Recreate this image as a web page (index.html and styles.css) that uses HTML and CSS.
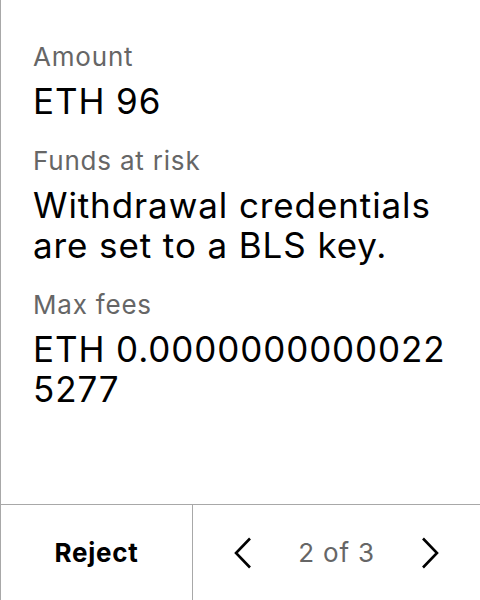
FILE: index.html
```html
<!DOCTYPE html>
<html>
<head>
<meta charset="utf-8">
<link rel="stylesheet" href="styles.css">
</head>
<body>
<div class="screen">
  <div class="content">
    <div class="field">
      <div class="label">Amount</div>
      <div class="value">ETH 96</div>
    </div>
    <div class="field">
      <div class="label">Funds at risk</div>
      <div class="value">Withdrawal credentials are set to a BLS key.</div>
    </div>
    <div class="field">
      <div class="label">Max fees</div>
      <div class="value break">ETH 0.00000000000225277</div>
    </div>
  </div>
  <div class="footer">
    <div class="reject">Reject</div>
    <div class="pager">
      <svg class="chev" width="18" height="32" viewBox="0 0 18 32"><path d="M16 1.5 L2 16 L16 30.5" fill="none" stroke="#000" stroke-width="2.6"/></svg>
      <span class="count">2 of 3</span>
      <svg class="chev" width="18" height="32" viewBox="0 0 18 32"><path d="M2 1.5 L16 16 L2 30.5" fill="none" stroke="#000" stroke-width="2.6"/></svg>
    </div>
  </div>
</div>
</body>
</html>
```
FILE: styles.css
```css
html, body {
  margin: 0;
  padding: 0;
  background: #fff;
}
body {
  font-family: Inter, "Noto Sans", sans-serif;
  color: #000;
}
.screen {
  width: 480px;
  height: 600px;
  box-sizing: border-box;
  border-left: 1px solid #a8a8a8;
  display: flex;
  flex-direction: column;
}
.content {
  flex: 1;
  padding: 41px 31px 0 32px;
  display: flex;
  flex-direction: column;
  gap: 24px;
}
.field {
  display: flex;
  flex-direction: column;
  gap: 8px;
}
.label {
  font-size: 26px;
  line-height: 32px;
  letter-spacing: 0.8px;
  color: #666;
}
.value {
  font-size: 35px;
  line-height: 40px;
  letter-spacing: 0.9px;
  color: #000;
}
.break {
  word-break: break-all;
}
.footer {
  height: 96px;
  box-sizing: border-box;
  border-top: 1px solid #a8a8a8;
  display: flex;
}
.reject {
  width: 191px;
  border-right: 1px solid #a8a8a8;
  display: flex;
  align-items: center;
  justify-content: center;
  font-size: 26px;
  font-weight: 700;
  letter-spacing: 0.7px;
}
.pager {
  flex: 1;
  display: flex;
  align-items: center;
  justify-content: space-between;
  padding: 0 41px 0 41px;
}
.count {
  font-size: 26px;
  letter-spacing: 0.8px;
  color: #666;
}
.chev {
  display: block;
}
```
